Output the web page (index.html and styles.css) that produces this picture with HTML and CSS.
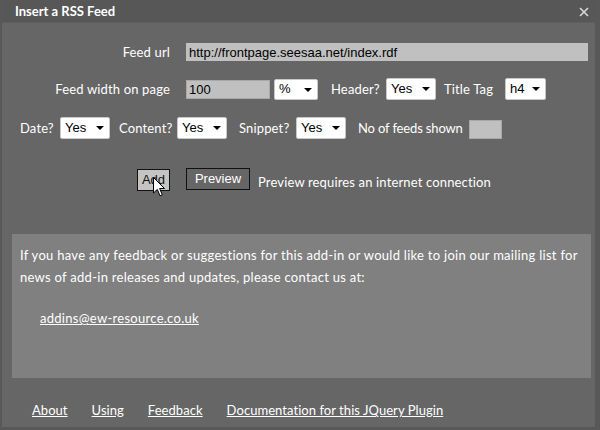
FILE: index.html
```html
<!DOCTYPE html>
<html lang="en">
  <head>
    <meta charset="UTF-8" />
    <title>Insert a RSS Feed</title>
    <link rel="stylesheet" href="styles.css">
  </head>
  <body>
    <div class="dialog">
      <div class="titlebar">
        <span class="title">Insert a RSS Feed</span>
        <svg class="close" width="10" height="10" viewBox="0 0 10 10">
          <path d="M1 1 L9 9 M9 1 L1 9" stroke="#d8d8d8" stroke-width="1.6" fill="none" />
        </svg>
      </div>

      <div class="form">
        <div class="row row-url">
          <label class="label-col">Feed url</label>
          <input class="field field-url" type="text" value="http://frontpage.seesaa.net/index.rdf">
        </div>

        <div class="row row-width">
          <label class="label-col">Feed width on page</label>
          <input class="field field-width" type="text" value="100">
          <span class="select sel-unit"><select><option>%</option><option>px</option></select></span>
          <label class="lbl lbl-header">Header?</label>
          <span class="select sel-yes"><select><option>Yes</option><option>No</option></select></span>
          <label class="lbl lbl-tag">Title Tag</label>
          <span class="select sel-tag"><select><option>h4</option><option>h3</option></select></span>
        </div>

        <div class="row row-opts">
          <label class="lbl lbl-date">Date?</label>
          <span class="select sel-yes"><select><option>Yes</option><option>No</option></select></span>
          <label class="lbl lbl-content">Content?</label>
          <span class="select sel-yes"><select><option>Yes</option><option>No</option></select></span>
          <label class="lbl lbl-snippet">Snippet?</label>
          <span class="select sel-yes"><select><option>Yes</option><option>No</option></select></span>
          <label class="lbl lbl-count">No of feeds shown</label>
          <input class="field field-count" type="text" value="">
        </div>

        <div class="row row-buttons">
          <span class="add-wrap">
            <button class="btn btn-add">Add</button>
            <svg class="cursor" width="13" height="20" viewBox="0 0 13 20">
              <path d="M0.5 0.5 L0.5 16 L4.3 12.4 L7 18.8 L9.3 17.8 L6.6 11.5 L11.5 11.5 Z" fill="#fff" stroke="#000" stroke-width="1" />
            </svg>
          </span>
          <button class="btn btn-preview">Preview</button>
          <span class="note">Preview requires an internet connection</span>
        </div>
      </div>

      <div class="panel">
        <p>If you have any feedback or suggestions for this add-in or would like to join our mailing list for news of add-in releases and updates, please contact us at:</p>
        <a class="email" href="#">addins@ew-resource.co.uk</a>
      </div>

      <div class="footer">
        <a href="#">About</a>
        <a href="#">Using</a>
        <a href="#">Feedback</a>
        <a href="#">Documentation for this JQuery Plugin</a>
      </div>
    </div>
  </body>
</html>
```

FILE: styles.css
```css
* {
  margin: 0;
  padding: 0;
  box-sizing: border-box;
}

body {
  font-family: Lato, "Open Sans", sans-serif;
  font-size: 13px;
  letter-spacing: 0.15px;
  color: #fff;
  background: #666;
}

.dialog {
  width: 600px;
  height: 430px;
  background: #666666;
  border-left: 2px solid #585858;
  border-right: 5px solid #585858;
  border-bottom: 3px solid #585858;
  overflow: hidden;
}

.titlebar {
  height: 23px;
  background: #575757;
  border-bottom: 1px solid #5e5e5e;
  display: flex;
  align-items: center;
  justify-content: space-between;
  padding: 0 6px 0 13px;
}

.title {
  font-weight: bold;
  font-size: 13px;
  letter-spacing: 0;
  color: #fff;
}

.close {
  display: block;
  margin-top: 2px;
}

/* form rows */
.form {
  padding-left: 18px;
}

.row {
  display: flex;
  align-items: center;
}

.row-url {
  margin-top: 20px;
  height: 18px;
}

.row-width {
  margin-top: 17px;
  height: 22px;
}

.row-opts {
  margin-top: 17px;
  height: 22px;
}

.row-buttons {
  margin-top: 28px;
  height: 23px;
  padding-left: 117px;
}

.label-col {
  width: 150px;
  text-align: right;
  margin-right: 16px;
}

.lbl {
  white-space: nowrap;
}

.field {
  font-family: "Liberation Sans", Arial, sans-serif;
  font-size: 13px;
  letter-spacing: 0;
  color: #000;
  background: #c0c0c0;
  border: 1px solid #a8a8a8;
  padding: 0 2px;
  outline: none;
}

.field-url {
  width: 402px;
  height: 18px;
  border-color: #c0c0c0;
}

.field-width {
  width: 84px;
  height: 19px;
}

.field-count {
  width: 33px;
  height: 19px;
  margin-left: 5px;
  margin-top: 2px;
}

/* selects with the small black triangle */
.select {
  position: relative;
  display: inline-block;
  height: 22px;
}

.select select {
  appearance: none;
  -webkit-appearance: none;
  width: 100%;
  height: 100%;
  font-family: "Liberation Sans", Arial, sans-serif;
  font-size: 13px;
  color: #000;
  background: #fff;
  border: 1px solid #c8c8c8;
  border-radius: 2px;
  padding: 0 0 2px 4px;
  outline: none;
}

.select::after {
  content: "";
  position: absolute;
  right: 6px;
  top: 9px;
  border-left: 4px solid transparent;
  border-right: 4px solid transparent;
  border-top: 4px solid #000;
  pointer-events: none;
}

.sel-unit {
  width: 44px;
  margin-left: 4px;
  height: 21px;
}

.sel-yes {
  width: 50px;
}

.sel-tag {
  width: 41px;
}

.lbl-header {
  width: 47px;
  margin: 0 8px 0 13px;
}

.lbl-tag {
  width: 53px;
  margin: 0 8px 0 8px;
}

.lbl-date {
  width: 32px;
  margin-right: 8px;
}

.lbl-content {
  width: 49px;
  margin: 0 9px 0 9px;
}

.lbl-snippet {
  width: 50px;
  margin: 0 7px 0 12px;
}

.lbl-count {
  width: 106px;
  margin-left: 12px;
  letter-spacing: -0.15px;
}

/* buttons */
.btn {
  font-family: "Liberation Sans", Arial, sans-serif;
  font-size: 13px;
  border: 1px solid #111;
  height: 22px;
}

.add-wrap {
  position: relative;
  display: inline-block;
  margin-top: 2px;
}

.btn-add {
  width: 33px;
  background: #c4c4c4;
  color: #111;
  display: block;
}

.cursor {
  position: absolute;
  left: 16px;
  top: 8px;
}

.btn-preview {
  width: 64px;
  margin-left: 16px;
  background: #666;
  color: #fff;
}

.note {
  margin-left: 8px;
  margin-top: 6px;
}

/* feedback panel */
.panel {
  margin: 44px 0 0 10px;
  width: 579px;
  height: 144px;
  background: #808080;
  padding: 10px 8px;
  line-height: 22px;
  letter-spacing: 0.28px;
}

.email {
  display: inline-block;
  margin: 19px 0 0 20px;
  color: #fff;
}

.footer {
  display: flex;
  gap: 24px;
  margin-top: 22px;
  padding-left: 30px;
  line-height: 20px;
  letter-spacing: 0.05px;
}

.footer a {
  color: #fff;
}
```
